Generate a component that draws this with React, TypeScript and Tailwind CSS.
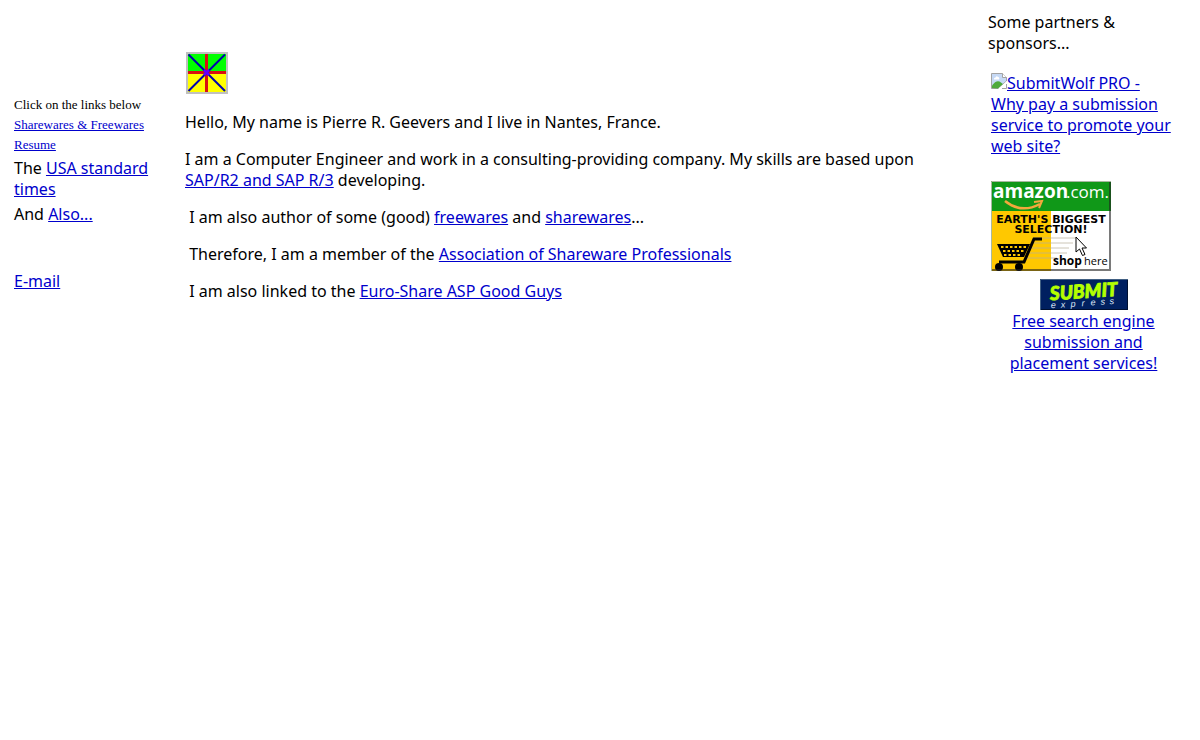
import type { ReactNode } from 'react';

interface TextLinkProps {
  href: string;
  children: ReactNode;
}

const TextLink = ({ href, children }: TextLinkProps) => (
  <a href={href} className="text-[#0000cc] underline">
    {children}
  </a>
);

const HomeLogo = () => (
  <svg width="42" height="42" viewBox="0 0 42 42" role="img" aria-label="Logo">
    <rect width="42" height="42" fill="#c0c0c0" />
    <rect x="2" y="2" width="38" height="19" fill="#00ff00" />
    <rect x="2" y="21" width="38" height="19" fill="#ffff00" />
    <path d="M2 20.5H40M20.5 2V40" stroke="#d81010" strokeWidth="3" />
    <path d="M2.5 2.5L39 39M39 2.5L2.5 39" stroke="#0000b0" strokeWidth="2" />
    <path d="M18 18L23 23M23 18L18 23" stroke="#6000ff" strokeWidth="2.5" />
  </svg>
);

const BrokenImage = () => (
  <svg width="16" height="16" viewBox="0 0 16 16" className="inline-block align-baseline">
    <path d="M.5 .5H11.5L15.5 4.5V8L7 15.5H.5Z" fill="#c6d9f5" stroke="#a3a3a3" />
    <path d="M11.5 .5V4.5H15.5" fill="#fff" stroke="#a3a3a3" />
    <path d="M3 6.5Q2.5 4.5 4.5 4.5Q5.5 2.5 7 4Q9 4.5 8 6.5Z" fill="#fff" />
    <path d="M1 15V12.5Q5 7 8.5 8.5L12 11L7 15.5Z" fill="#4faa3c" />
    <path d="M16 8L7.5 15.5H16Z" fill="#fff" />
    <path d="M15.5 11V15.5H11" fill="none" stroke="#a3a3a3" />
  </svg>
);

const AmazonBanner = () => (
  <svg width="120" height="90" viewBox="0 0 120 90" role="img" aria-label="amazon.com">
    <rect width="120" height="90" fill="#fff" />
    <rect width="120" height="30" fill="#109818" />
    <rect y="30" width="60" height="60" fill="#ffc800" />
    <path d="M42 57H85M43 62H82M40 67H78M38 72H76M36 77H66" stroke="#b8b09a" strokeWidth="1" opacity=".7" />
    <g fill="#fff" fontFamily="'Open Sans', sans-serif">
      <text x="2" y="17" fontSize="19" fontWeight="700">amazon</text>
      <text x="75" y="17" fontSize="17">.com.</text>
    </g>
    <path d="M14 20Q30 33 49 23" fill="none" stroke="#f4a83c" strokeWidth="2.5" />
    <path d="M43 21L51 20L48 27" fill="none" stroke="#f4a83c" strokeWidth="2" />
    <g fill="#000" fontFamily="'DejaVu Sans', sans-serif" fontSize="11" fontWeight="700" textAnchor="middle">
      <text x="60" y="42">EARTH'S BIGGEST</text>
      <text x="60" y="52">SELECTION!</text>
    </g>
    <path d="M51 58H43L33 81H8" fill="none" stroke="#000" strokeWidth="3" />
    <path d="M6 63H39L33 76H12Z" fill="#000" />
    <path d="M10 66H35M12 70H33M13 74H31" stroke="#ffc800" strokeWidth="2" strokeDasharray="2.5 2" />
    <circle cx="8" cy="86" r="4" />
    <circle cx="28" cy="86" r="4" />
    <path d="M85 56V71L88.5 68L91.5 74.5L94 73.5L91 67H95.5Z" fill="#fff" stroke="#000" />
    <g fontFamily="'Open Sans', sans-serif">
      <text x="62" y="84" fontSize="12" fontWeight="700">shop</text>
      <text x="93" y="84" fontSize="11">here</text>
    </g>
    <path d="M.5 90V.5H120" fill="none" stroke="#a8b8a0" />
    <path d="M119 1V89H1" fill="none" stroke="#222" strokeWidth="2" opacity=".6" />
  </svg>
);

const SubmitBanner = () => (
  <svg width="88" height="31" viewBox="0 0 88 31" role="img" aria-label="Submit Express">
    <rect width="88" height="31" fill="#002060" />
    <path d="M.5 31V.5H88" fill="none" stroke="#426083" />
    <path d="M87.5 1V30.5H1" fill="none" stroke="#001030" />
    <g transform="rotate(-4 44 15)">
      <text x="10" y="19" fill="#b4ff00" stroke="#b4ff00" strokeWidth=".8" fontFamily="'Lato', sans-serif" fontSize="19" fontWeight="900" fontStyle="italic">
        SUBMIT
      </text>
      <text x="10 20 30 41 50 60 69" y="27" fill="#dce6f5" fontFamily="'Liberation Sans', sans-serif" fontSize="9" fontStyle="italic">
        express
      </text>
    </g>
  </svg>
);

const Sidebar = () => (
  <nav className="w-40 shrink-0 pl-3.5 pt-[95px]">
    <div className="font-['Liberation_Serif',serif] text-[13px] leading-5">
      <p>Click on the links below</p>
      <p><TextLink href="#sharewares">Sharewares &amp; Freewares</TextLink></p>
      <p><TextLink href="#resume">Resume</TextLink></p>
    </div>
    <p className="mt-[3px]">The <TextLink href="#times">USA standard times</TextLink></p>
    <p className="mt-1">And <TextLink href="#also">Also...</TextLink></p>
    <p className="mt-[46px]"><TextLink href="#email">E-mail</TextLink></p>
  </nav>
);

const Intro = () => (
  <main className="min-w-0 flex-1 pl-[25px] pr-10 pt-[52px]">
    <div className="pl-px"><HomeLogo /></div>
    <div className="mt-[18px] flex flex-col gap-4">
      <p>Hello, My name is Pierre R. Geevers and I live in Nantes, France.</p>
      <p>
        I am a Computer Engineer and work in a consulting-providing company. My skills are based upon{' '}
        <TextLink href="#sap">SAP/R2 and SAP R/3</TextLink> developing.
      </p>
      <p>
        &nbsp;I am also author of some (good) <TextLink href="#freewares">freewares</TextLink> and{' '}
        <TextLink href="#sharewares">sharewares</TextLink>...
      </p>
      <p>
        &nbsp;Therefore, I am a member of the{' '}
        <TextLink href="#asp">Association of Shareware Professionals</TextLink>
      </p>
      <p>
        &nbsp;I am also linked to the <TextLink href="#euroshare">Euro-Share ASP Good Guys</TextLink>
      </p>
    </div>
  </main>
);

const Partners = () => (
  <aside className="w-[212px] shrink-0 pr-6 pt-3">
    <p>Some partners &amp;<br />sponsors...</p>
    <div className="pl-[3px] pt-[19px]">
      <p>
        <TextLink href="#submitwolf">
          <BrokenImage />SubmitWolf PRO - Why pay a submission service to promote your web site?
        </TextLink>
      </p>
      <a href="#amazon" className="mt-6 block w-[120px]"><AmazonBanner /></a>
      <a href="#submit" className="mt-2 flex flex-col items-center gap-px px-3 text-center text-[#0000cc] underline">
        <SubmitBanner />
        Free search engine submission and placement services!
      </a>
    </div>
  </aside>
);

const App = () => (
  <div className="flex bg-white font-['Noto_Sans',sans-serif] text-base leading-[21px] text-black">
    <Sidebar />
    <Intro />
    <Partners />
  </div>
);

export default App;
